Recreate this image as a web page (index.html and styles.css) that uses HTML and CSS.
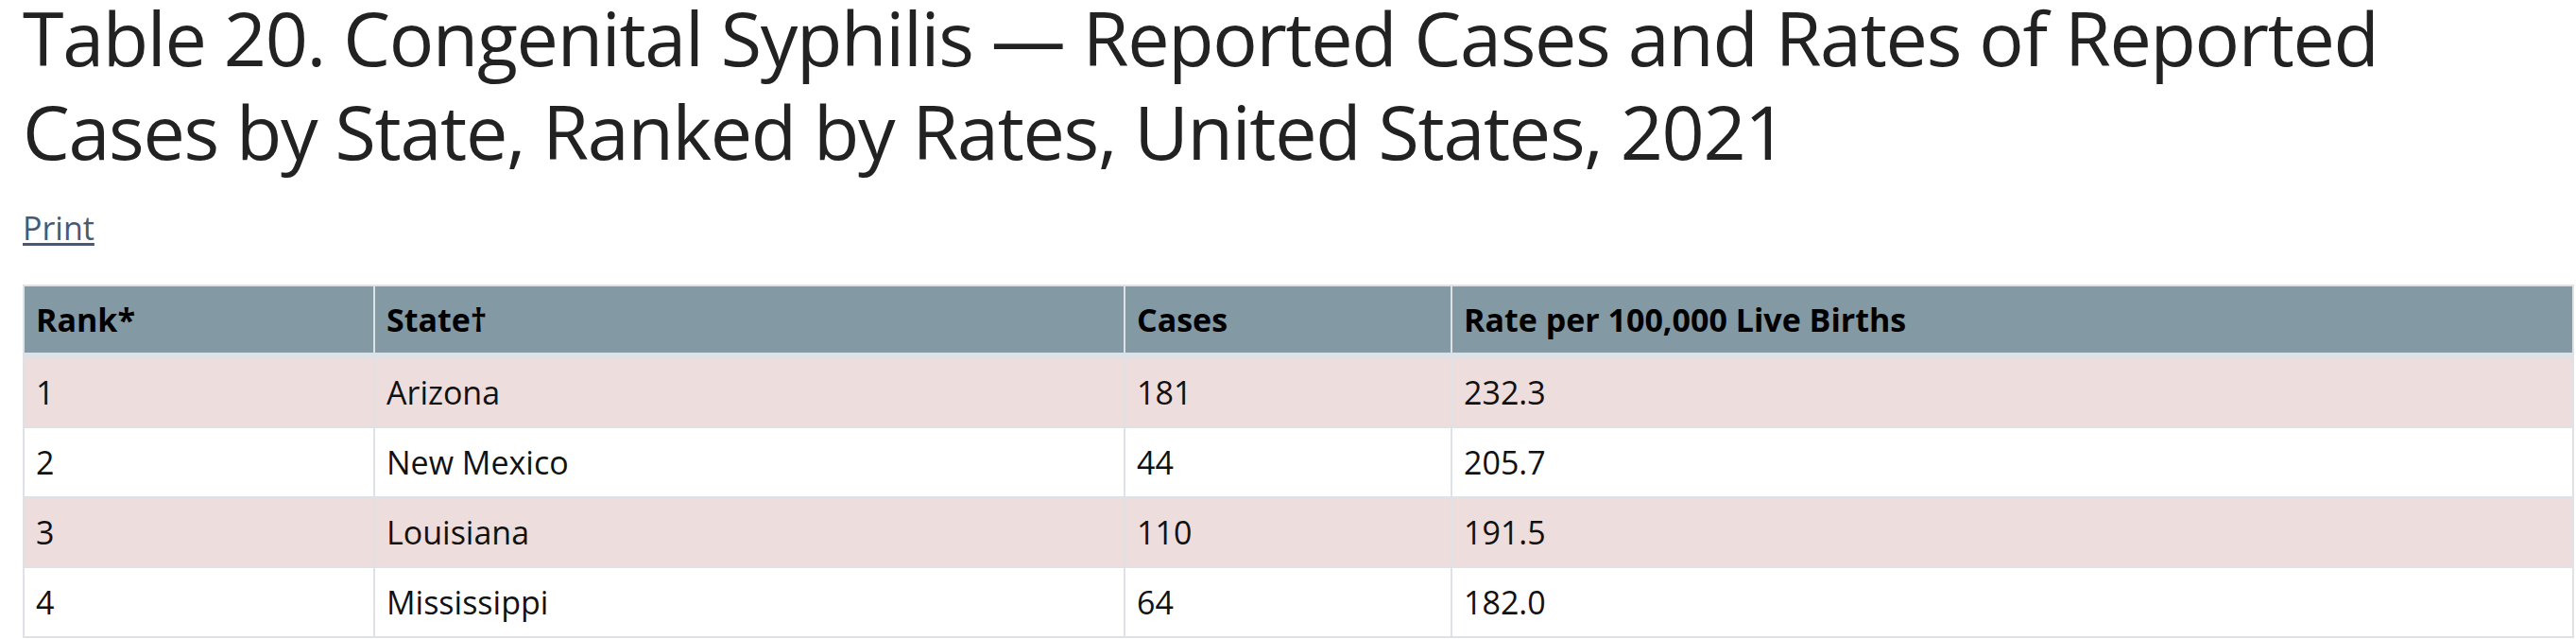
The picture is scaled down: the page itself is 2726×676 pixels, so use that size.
FILE: index.html
```html
<!DOCTYPE html>
<html lang="en">
<head>
<meta charset="utf-8">
<title>Table 20. Congenital Syphilis</title>
<link rel="stylesheet" href="styles.css">
</head>
<body>
<main class="page">
  <h1 class="title"><span class="title-line">Table 20. Congenital Syphilis — Reported Cases and Rates of Reported</span> <span class="title-line">Cases by State, Ranked by Rates, United States, 2021</span></h1>
  <p class="print-line"><a class="print-link" href="#">Print</a></p>
  <table class="data-table">
    <colgroup>
      <col class="c-rank">
      <col class="c-state">
      <col class="c-cases">
      <col class="c-rate">
    </colgroup>
    <thead>
      <tr>
        <th>Rank*</th>
        <th>State†</th>
        <th>Cases</th>
        <th>Rate per 100,000 Live Births</th>
      </tr>
    </thead>
    <tbody>
      <tr><td>1</td><td>Arizona</td><td>181</td><td>232.3</td></tr>
      <tr><td>2</td><td>New Mexico</td><td>44</td><td>205.7</td></tr>
      <tr><td>3</td><td>Louisiana</td><td>110</td><td>191.5</td></tr>
      <tr><td>4</td><td>Mississippi</td><td>64</td><td>182.0</td></tr>
    </tbody>
  </table>
</main>
</body>
</html>
```
FILE: styles.css
```css
html, body {
  margin: 0;
  padding: 0;
  background: #ffffff;
}

body {
  font-family: "Open Sans", "Liberation Sans", sans-serif;
  color: #212529;
  overflow: hidden;
}

.page {
  padding: 0 2px 0 24px;
}

.title {
  margin: 0;
  font-size: 79px;
  font-weight: 400;
  line-height: 80px;
  letter-spacing: -1.3px;
  color: #222222;
}

.title-line {
  display: block;
  white-space: nowrap;
}

.title-line + .title-line {
  margin-top: 19px;
}

.print-line {
  margin: 39px 0 0;
  font-size: 34px;
  line-height: 46px;
}

.print-link {
  color: #465a78;
  text-decoration: underline;
  text-decoration-thickness: 3px;
  text-underline-offset: 3px;
}

.data-table {
  margin-top: 37px;
  width: 2700px;
  border-collapse: collapse;
  table-layout: fixed;
  border: 2px solid #dee2e6;
}

.c-rank { width: 371px; }
.c-state { width: 794px; }
.c-cases { width: 346px; }
.c-rate { width: auto; }

.data-table th,
.data-table td {
  text-align: left;
  vertical-align: top;
  border: 2px solid #dee2e6;
  padding: 12px 12px;
}

.data-table th {
  background: #8399a3;
  color: #000000;
  font-weight: 700;
  font-size: 34px;
  line-height: 46px;
  border-bottom-width: 6px;
}

.data-table td {
  font-size: 34px;
  line-height: 48px;
  color: #111111;
  background: #ffffff;
}

.data-table tbody tr:nth-child(odd) td {
  background: #eedddd;
}
```
